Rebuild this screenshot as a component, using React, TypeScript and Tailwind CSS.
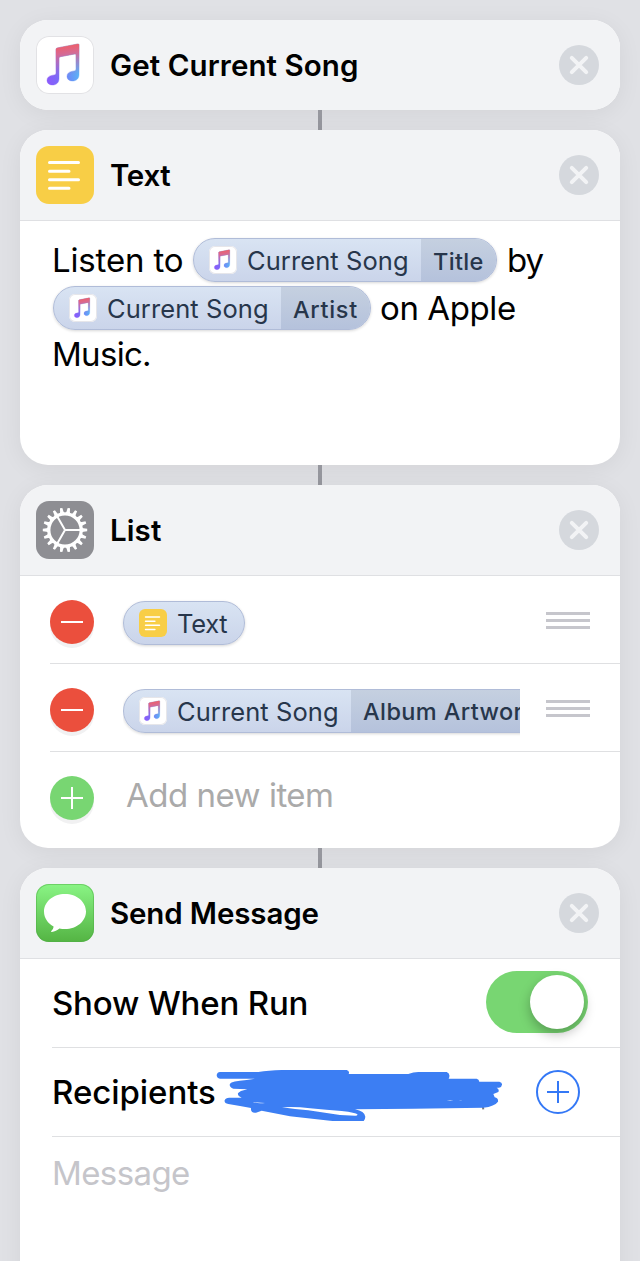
import { useId, type ReactNode } from "react";

function MusicGlyph({ className }: { className: string }) {
  const id = useId();
  const shape =
    "M20 13.6c0-1 .5-1.5 1.4-1.7L41.6 8c.9-.2 1.4.2 1.4 1.1V38.5c0 4.2-2.600 6.500-6.600 6.500-3.200 0-5.400-1.900-5.400-4.600 0-2.800 1.800-4.400 4.800-5l2.500-.5c1.200-.3 1.700-.9 1.700-2V18.700c0-.7-.4-.9-1-.8L24 20.800c-.7.1-1 .5-1 1.200V42.500c0 4.200-2.600 6.500-6.600 6.500-3.200 0-5.400-1.900-5.400-4.600 0-2.800 1.800-4.400 4.800-5l2.500-.5c1.200-.3 1.700-.9 1.700-2Z";
  return (
    <svg viewBox="0 0 58 58" className={className}>
      <defs>
        <linearGradient id={id + "h"} gradientUnits="userSpaceOnUse" x1="13" y1="46" x2="42" y2="38">
          <stop offset="0" stopColor="#8a5cfb" />
          <stop offset="0.35" stopColor="#7a6cf8" />
          <stop offset="1" stopColor="#5cb0f6" />
        </linearGradient>
        <linearGradient id={id + "v"} gradientUnits="userSpaceOnUse" x1="28" y1="10" x2="32" y2="40">
          <stop offset="0" stopColor="#ee5f6c" />
          <stop offset="0.25" stopColor="#e0658a" stopOpacity="0.92" />
          <stop offset="1" stopColor="#b068c8" stopOpacity="0" />
        </linearGradient>
      </defs>
      <path d={shape} fill={`url(#${id}h)`} stroke={`url(#${id}h)`} strokeWidth="0.400" />
      <path d={shape} fill={`url(#${id}v)`} stroke={`url(#${id}v)`} strokeWidth="0.400" />
    </svg>
  );
}

function LinesGlyph({ className }: { className: string }) {
  return (
    <svg viewBox="0 0 58 58" className={className} stroke="#fff" strokeWidth="3" strokeLinecap="round">
      <path d="M13.500 16.500H42.500M13.500 25.200H33M13.500 33.700H42.500M13.500 42.300H33" />
    </svg>
  );
}

function GearGlyph() {
  const teeth = Array.from({ length: 18 }, (_, i) => i * 20);
  return (
    <svg viewBox="-29 -29 58 58" className="size-[58px]">
      <circle r="16.200" fill="none" stroke="#fff" strokeWidth="3.200" />
      {teeth.map((a) => (
        <path key={a} d="M16.500 -2.500L18.500 -1.700L22.200 -1.200V1.200L18.500 1.700L16.500 2.500Z" fill="#fff" transform={`rotate(${a})`} />
      ))}
      <path d="M0 0H16M0 0L-8 -13.900M0 0L-8 13.900" stroke="#fff" strokeWidth="2" fill="none" />
    </svg>
  );
}

function BubbleGlyph() {
  return (
    <svg viewBox="0 0 58 58" className="size-[58px]">
      <path
        d="M29 10C40.700 10 50 17.800 50 27.500S40.700 45 29 45c-1.900 0-3.800-.2-5.600-.6-2 1.800-4.800 3.200-7.600 3.500-.8.100-.9-.5-.5-.9 1.300-1.200 2.100-2.700 2.300-4.400C11.900 39.500 8 34 8 27.500 8 17.800 17.300 10 29 10Z"
        fill="#fff"
      />
    </svg>
  );
}

function CloseButton() {
  return (
    <button aria-label="Remove" className="ml-auto size-10 rounded-full bg-[#d5d8dd]">
      <svg viewBox="0 0 40 40" className="size-10" stroke="#f2f3f5" strokeWidth="4" strokeLinecap="round">
        <path d="M12.800 12.800L27.200 27.200M27.200 12.800L12.800 27.200" />
      </svg>
    </button>
  );
}

function Header({ icon, title, divided = true }: { icon: ReactNode; title: ReactNode; divided?: boolean }) {
  return (
    <header
      className={
        "flex shrink-0 items-center bg-[#f2f3f5] pr-[21px] pl-4 " +
        (divided ? "h-[91px] border-b border-[#dfe0e3]" : "h-[90px]")
      }
    >
      {icon}
      {title}
      <CloseButton />
    </header>
  );
}

function Title({ className, children }: { className: string; children: ReactNode }) {
  return <h2 className={"ml-4 text-[29.500px] leading-9 font-semibold whitespace-nowrap " + className}>{children}</h2>;
}

function Card({ className, children }: { className: string; children: ReactNode }) {
  return (
    <section className={"flex w-[600px] shrink-0 flex-col overflow-hidden bg-white shadow-[0_4px_24px_rgba(0,0,0,0.06)] " + className}>
      {children}
    </section>
  );
}

function Connector() {
  return <div className="h-5 w-1 shrink-0 bg-[#96979e]" />;
}

function Token({ icon, label, labelClass, detail, detailClass, className }: {
  icon: ReactNode; label: string; labelClass: string; detail?: string; detailClass?: string; className: string;
}) {
  return (
    <span
      className={
        "inline-flex h-11 shrink-0 items-stretch overflow-hidden rounded-full border border-[#b0bcd8] bg-linear-to-b from-[#d9e4f3] to-[#cad4ea] bg-origin-border text-[#27364b] shadow-[0_1px_3px_rgba(0,0,0,0.16)] " +
        className
      }
    >
      <span className="flex grow items-center pl-[15px]">
        {icon}
        <span className={"mt-0.5 ml-[10px] text-[25.500px] leading-8 whitespace-nowrap " + labelClass}>{label}</span>
      </span>
      {detail && (
        <span className={"flex shrink-0 items-center bg-linear-to-b from-[#c5d0e0] to-[#b5c2dc] pt-[3px] pl-3 text-[23.500px] leading-8 font-medium whitespace-nowrap " + detailClass}>
          {detail}
        </span>
      )}
    </span>
  );
}

const miniMusic = (
  <span className="size-7 shrink-0 rounded-[6px] bg-white ring-1 ring-[#e6e6ea] ring-inset">
    <MusicGlyph className="size-7" />
  </span>
);

const miniText = (
  <span className="size-7 shrink-0 rounded-[6px] bg-[#f8ce46]">
    <LinesGlyph className="size-7" />
  </span>
);

function RoundButton({ className, plus = false }: { className: string; plus?: boolean }) {
  return (
    <button aria-label={plus ? "Add" : "Delete"} className={"size-11 shrink-0 rounded-full shadow-[0_4px_0_#f1f1f2] " + className}>
      <svg viewBox="0 0 44 44" className="size-11" stroke="#fff" strokeWidth="2">
        <path d={plus ? "M11 22H33M22 11V33" : "M11 22H33"} />
      </svg>
    </button>
  );
}

function Grip() {
  return (
    <span className="mr-[30px] flex w-11 shrink-0 flex-col gap-1">
      <span className="h-[3px] bg-[#c6c6cc]" />
      <span className="h-[3px] bg-[#c6c6cc]" />
      <span className="h-[3px] bg-[#c6c6cc]" />
    </span>
  );
}

function Scribble() {
  return (
    <svg viewBox="48 49 870 162" className="h-[54px] w-[290px]">
      <path d="M848 165L850 176" stroke="#777" strokeWidth="6" />
      <path
        d="M60 64H175Q205 59 245 58H440Q450 62 446 70H625Q640 64 655 64H740Q753 70 746 84H830Q837 86 838 93H898Q907 95 906 102Q905 110 897 111H890Q899 116 895 124L880 130L884 140Q896 143 894 153Q884 167 850 171L640 174L465 176Q494 182 496 198Q495 213 485 213H415L390 210L270 197L185 180L168 186Q151 188 153 172L120 166L85 160Q72 158 74 149Q77 140 90 141H125Q112 136 114 128Q118 121 142 116L100 114Q86 108 90 99Q94 92 140 88L165 84H60Q50 82 50 73Q52 64 60 64Z"
        fill="#3c7ef3"
      />
      <path d="M246 170Q285 167 330 173Q380 178 425 181Q468 186 472 191Q474 195 466 195L420 193L380 187L325 179Q285 176 246 170ZM158 156Q175 154 195 157Q178 159 158 156ZM740 150Q750 147 761 150ZM776 151Q782 149 788 151Z" fill="#fff" />
    </svg>
  );
}

export default function App() {
  return (
    <main className="flex h-[1261px] w-[640px] flex-col items-center overflow-hidden bg-[#e0e1e5] pt-5 font-['Inter','Liberation_Sans',sans-serif] text-black">
      <Card className="rounded-[28px]">
        <Header
          divided={false}
          icon={
            <span className="size-[58px] shrink-0 rounded-[13px] bg-white ring-1 ring-[#e2e2e5] ring-inset">
              <MusicGlyph className="size-[58px]" />
            </span>
          }
          title={<Title className="tracking-[0.080px]">Get Current Song</Title>}
        />
      </Card>
      <Connector />

      <Card className="h-[335px] rounded-[28px]">
        <Header
          icon={
            <span className="size-[58px] shrink-0 rounded-[13px] bg-[#f8ce46]">
              <LinesGlyph className="size-[58px]" />
            </span>
          }
          title={<Title className="tracking-[-0.300px]">Text</Title>}
        />
        <div className="flex flex-col pt-[17px] pl-8 text-[33px] leading-[44px]">
          <div className="flex h-12 items-start">
            <span className="w-[141px] tracking-[-0.150px]">Listen to</span>
            <Token className="w-[304px]" icon={miniMusic} label="Current Song" labelClass="tracking-[0.080px]" detail="Title" detailClass="w-[75px] tracking-[0.350px]" />
            <span className="ml-[10px] tracking-[-1px]">by</span>
          </div>
          <div className="flex h-12 items-start pl-px">
            <Token className="w-[318px]" icon={miniMusic} label="Current Song" labelClass="tracking-[0.080px]" detail="Artist" detailClass="w-[89px] tracking-[0.700px]" />
            <span className="ml-[9px] tracking-[-0.400px]">on Apple</span>
          </div>
          <div className="-mt-0.5 tracking-[-0.700px]">Music.</div>
        </div>
      </Card>
      <Connector />

      <Card className="h-[363px] rounded-[28px]">
        <Header
          icon={
            <span className="size-[58px] shrink-0 rounded-[13px] bg-[#8e8e93]">
              <GearGlyph />
            </span>
          }
          title={<Title className="tracking-[0.100px]">List</Title>}
        />
        <div className="flex flex-col pl-[30px]">
          <div className="flex h-[88px] items-center border-b border-[#dfe0e2] pt-1">
            <RoundButton className="bg-[#eb4f3d]" />
            <div className="mt-0.5 ml-[29px] flex w-[397px]">
              <Token className="w-[122px]" icon={miniText} label="Text" labelClass="tracking-[-0.300px]" />
            </div>
            <div className="-mt-0.5 ml-auto"><Grip /></div>
          </div>
          <div className="flex h-[88px] items-center border-b border-[#dfe0e2] pt-1">
            <RoundButton className="bg-[#eb4f3d]" />
            <div className="mt-0.5 -mb-1 ml-[29px] flex w-[397px] overflow-hidden pb-1">
              <Token className="w-[460px]" icon={miniMusic} label="Current Song" labelClass="tracking-[0.080px]" detail="Album Artwork" detailClass="w-[231px] tracking-[0.400px]" />
            </div>
            <div className="-mt-0.5 ml-auto"><Grip /></div>
          </div>
          <div className="flex h-[92px] items-center">
            <RoundButton plus className="bg-[#78d672]" />
            <span className="-mt-1.5 ml-8 text-[33px] leading-[44px] tracking-[-0.500px] text-[#aaaaaa]">Add new item</span>
          </div>
        </div>
      </Card>
      <Connector />

      <Card className="h-[420px] rounded-t-[28px]">
        <Header
          icon={
            <span className="size-[58px] shrink-0 rounded-[13px] bg-linear-to-b from-[#8af585] to-[#54b443] ring-1 ring-[#4fae45]/50 ring-inset">
              <BubbleGlyph />
            </span>
          }
          title={<Title className="tracking-[-0.130px]">Send Message</Title>}
        />
        <div className="flex flex-col pl-8 text-[33px] leading-[44px]">
          <div className="flex h-[89px] items-center border-b border-[#dfe0e2] pr-8">
            <span className="font-medium tracking-[-0.200px]">Show When Run</span>
            <span className="-mt-0.5 ml-auto flex h-[62px] w-[102px] items-center justify-end rounded-full bg-[#78d672] pr-1">
              <span className="size-[54px] rounded-full bg-white shadow-[0_5px_12px_rgba(0,0,0,0.27)]" />
            </span>
          </div>
          <div className="flex h-[89px] items-center border-b border-[#dfe0e2] pr-10">
            <span className="w-[164px] font-medium tracking-[-0.050px]">Recipients</span>
            <span className="mt-1 w-[290px] shrink-0"><Scribble /></span>
            <button aria-label="Add recipient" className="ml-auto size-11 shrink-0">
              <svg viewBox="0 0 44 44" className="size-11" fill="none" stroke="#3478f6" strokeWidth="2">
                <circle cx="22" cy="22" r="21" />
                <path d="M11 22H33M22 11V33" />
              </svg>
            </button>
          </div>
          <span className="mt-[14px] tracking-[-0.600px] text-[#c5c5ca]">Message</span>
        </div>
      </Card>
    </main>
  );
}
